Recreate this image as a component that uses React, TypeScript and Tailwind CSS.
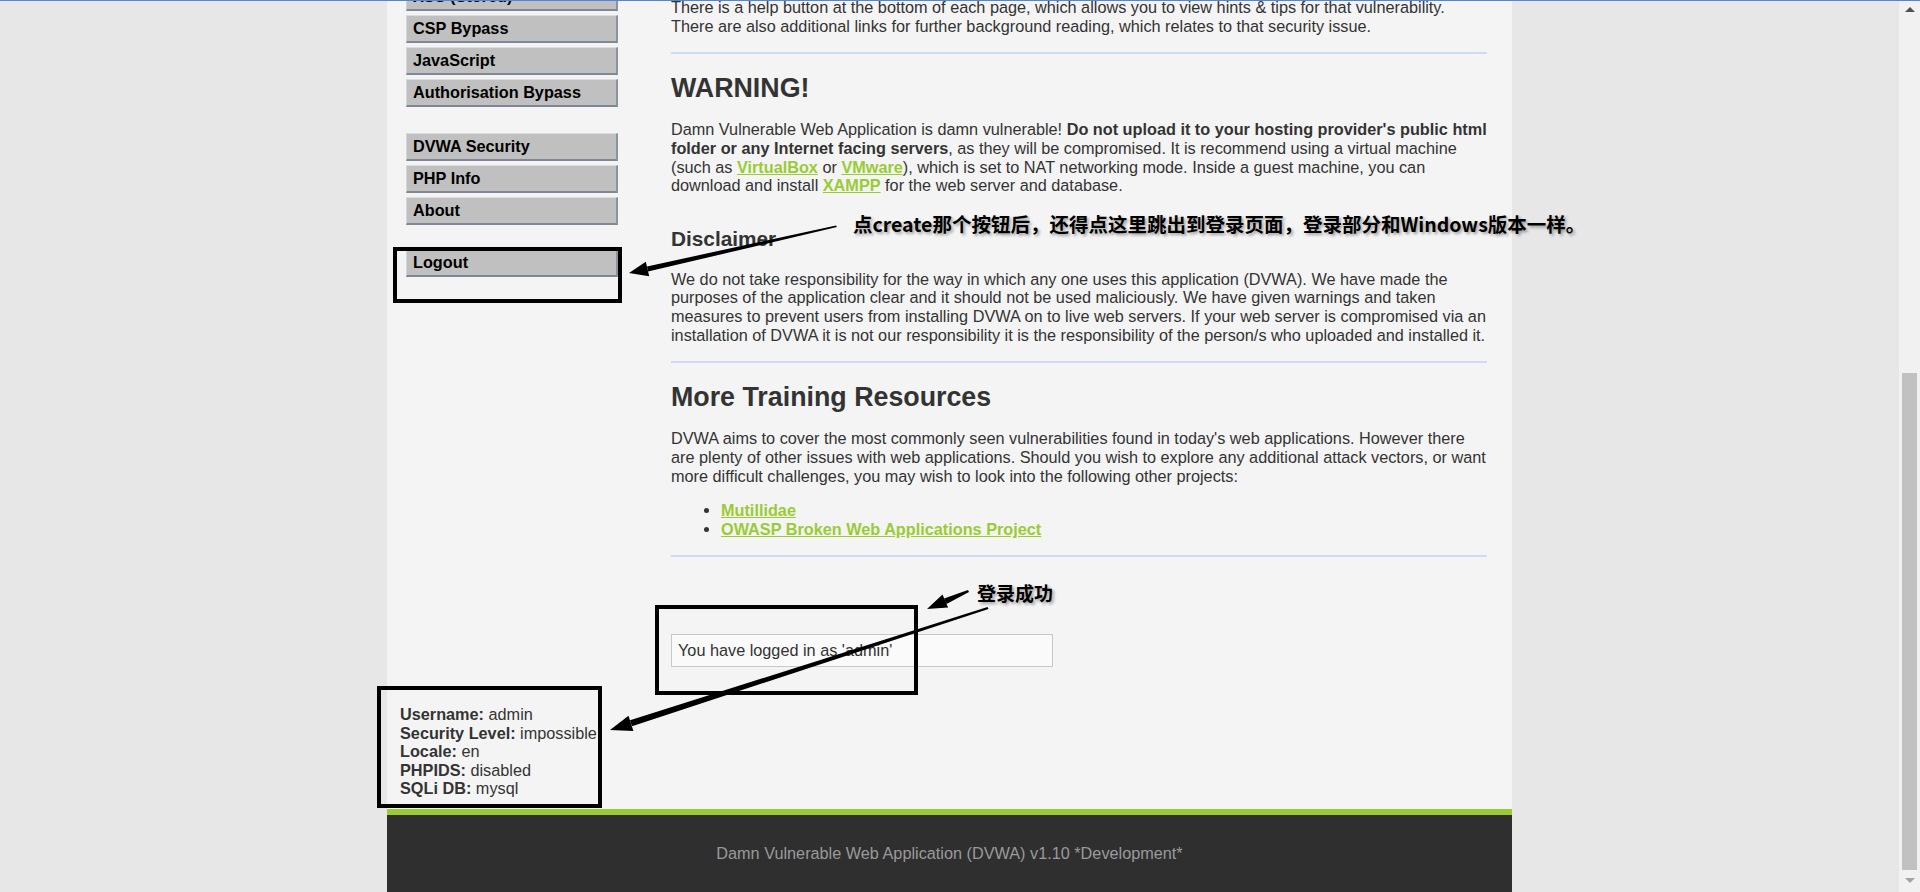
import type { ReactNode } from 'react';

const FONT = "font-['Liberation_Sans',Arial,sans-serif]";

function MenuItem({ children }: { children: ReactNode }) {
  return (
    <li className="mb-[4px] flex h-[28px] items-center border-t border-l border-t-[#dcdcdc] border-l-[#d4d4d4] border-r-2 border-b-2 border-r-[#8a93a0] border-b-[#7d8796] bg-[#c0c0c0] pl-[6px] text-[16.25px] font-bold text-black">
      {children}
    </li>
  );
}

function Lnk({ children }: { children: ReactNode }) {
  return <span className="font-bold text-[#99cc33] underline">{children}</span>;
}

function Rule() {
  return <div className="h-[2px] bg-[#cfdbf5]" />;
}

function Annotations() {
  return (
    <div className="pointer-events-none absolute inset-0">
      {/* boxes */}
      <div className="absolute left-[393px] top-[247px] h-[56px] w-[229px] border-4 border-black" />
      <div className="absolute left-[655px] top-[605px] h-[90px] w-[263px] border-4 border-black" />
      <div className="absolute left-[377px] top-[686px] h-[122px] w-[225px] border-4 border-black" />

      <svg className="absolute inset-0" width="1920" height="892" viewBox="0 0 1920 892">
        {/* arrow to Logout */}
        <polygon points="836,225.5 837,227 648,271.6 647,266.4" fill="#000" />
        <polygon points="629,273 645.8,261.7 649.2,276.3" fill="#000" />
        {/* short arrow to login box */}
        <polygon points="968,590 969,592 946.5,604 944,598.5" fill="#000" />
        <polygon points="927,609 942.5,594.6 948.1,607.4" fill="#000" />
        {/* long arrow to user info */}
        <polygon points="987.5,607 988.5,609 632,726.3 630,720.3" fill="#000" />
        <polygon points="610,730 628.5,715.7 633.4,730.9" fill="#000" />
      </svg>

      <span className="absolute left-[853px] top-[210px] whitespace-nowrap font-['Noto_Sans_CJK_SC',sans-serif] text-[19.5px] font-bold leading-[28px] text-black [text-shadow:2px_2px_3px_rgba(0,0,0,0.35)]">
        点create那个按钮后，还得点这里跳出到登录页面，登录部分和Windows版本一样。
      </span>
      <span className="absolute left-[977px] top-[580px] whitespace-nowrap font-['Noto_Sans_CJK_SC',sans-serif] text-[19px] font-bold leading-[26px] text-black [text-shadow:2px_2px_3px_rgba(0,0,0,0.35)]">
        登录成功
      </span>
    </div>
  );
}

function Scrollbar() {
  return (
    <div className="flex h-full w-[21px] shrink-0 flex-col items-center bg-[#f1f1f1]">
      <div className="mt-[7px] h-0 w-0 border-x-[5px] border-b-[5px] border-x-transparent border-b-[#505050]" />
      <div className="mt-[361px] h-[497px] w-[15px] bg-[#c1c1c1]" />
      <div className="mt-[8px] h-0 w-0 border-x-[5px] border-t-[5px] border-x-transparent border-t-[#a3a3a3]" />
    </div>
  );
}

export default function App() {
  return (
    <div className={`relative flex h-[892px] w-[1920px] overflow-hidden bg-[#e7e7e7] ${FONT} text-[#333]`}>
      <div className="flex h-full flex-1 justify-center">
        <div className="flex h-full w-[1125px] flex-col bg-[#f4f4f4]">
          <div className="flex min-h-0 flex-1 pl-[13px]">
            {/* left column */}
            <div className="w-[218px] shrink-0">
              <ul className="mt-[-17px] pl-[6px]">
                <MenuItem>XSS (Stored)</MenuItem>
                <MenuItem>CSP Bypass</MenuItem>
                <MenuItem>JavaScript</MenuItem>
                <MenuItem>Authorisation Bypass</MenuItem>
              </ul>
              <ul className="mt-[26px] pl-[6px]">
                <MenuItem>DVWA Security</MenuItem>
                <MenuItem>PHP Info</MenuItem>
                <MenuItem>About</MenuItem>
              </ul>
              <ul className="mt-[24px] pl-[6px]">
                <MenuItem>Logout</MenuItem>
              </ul>
              <div className="mt-[428px] whitespace-nowrap text-[16.25px] leading-[18.6px]">
                <div><b>Username:</b> admin</div>
                <div><b>Security Level:</b> impossible</div>
                <div><b>Locale:</b> en</div>
                <div><b>PHPIDS:</b> disabled</div>
                <div><b>SQLi DB:</b> mysql</div>
              </div>
            </div>

            {/* main body */}
            <div className="ml-[53px] w-[816px] whitespace-nowrap text-[16.25px] leading-[18.7px]">
              <p className="mt-[-2px]">
                There is a help button at the bottom of each page, which allows you to view hints &amp; tips for that vulnerability.
                <br />
                There are also additional links for further background reading, which relates to that security issue.
              </p>
              <div className="mt-[17px]">
                <Rule />
              </div>
              <h2 className="mt-[19px] text-[26.8px] font-bold leading-[30.8px]">WARNING!</h2>
              <p className="mt-[16px]">
                Damn Vulnerable Web Application is damn vulnerable! <b>Do not upload it to your hosting provider's public html</b>
                <br />
                <b>folder or any Internet facing servers</b>, as they will be compromised. It is recommend using a virtual machine
                <br />
                (such as <Lnk>VirtualBox</Lnk> or <Lnk>VMware</Lnk>), which is set to NAT networking mode. Inside a guest machine, you can
                <br />
                download and install <Lnk>XAMPP</Lnk> for the web server and database.
              </p>
              <h3 className="mt-[32px] text-[20.8px] font-bold leading-[24px]">Disclaimer</h3>
              <p className="mt-[18.5px]">
                We do not take responsibility for the way in which any one uses this application (DVWA). We have made the
                <br />
                purposes of the application clear and it should not be used maliciously. We have given warnings and taken
                <br />
                measures to prevent users from installing DVWA on to live web servers. If your web server is compromised via an
                <br />
                installation of DVWA it is not our responsibility it is the responsibility of the person/s who uploaded and installed it.
              </p>
              <div className="mt-[17px]">
                <Rule />
              </div>
              <h2 className="mt-[19px] text-[26.8px] font-bold leading-[30.8px]">More Training Resources</h2>
              <p className="mt-[16px]">
                DVWA aims to cover the most commonly seen vulnerabilities found in today's web applications. However there
                <br />
                are plenty of other issues with web applications. Should you wish to explore any additional attack vectors, or want
                <br />
                more difficult challenges, you may wish to look into the following other projects:
              </p>
              <ul className="mt-[16px] list-disc pl-[50px]">
                <li><Lnk>Mutillidae</Lnk></li>
                <li><Lnk>OWASP Broken Web Applications Project</Lnk></li>
              </ul>
              <div className="mt-[16px]">
                <Rule />
              </div>
              <div className="mt-[77px] flex h-[33px] w-[382px] items-center border border-[#c8c8c8] bg-[#fafafa] pl-[6px]">
                You have logged in as 'admin'
              </div>
            </div>
          </div>

          <div className="flex h-[83px] shrink-0 items-center justify-center border-t-[6px] border-[#99cc33] bg-[#2f2f2f] text-[16.25px] text-[#9a9a9a]">
            Damn Vulnerable Web Application (DVWA) v1.10 *Development*
          </div>
        </div>
      </div>
      <Scrollbar />
      <div className="absolute left-0 top-0 h-px w-full bg-[#4f86d9]" />
      <Annotations />
    </div>
  );
}
